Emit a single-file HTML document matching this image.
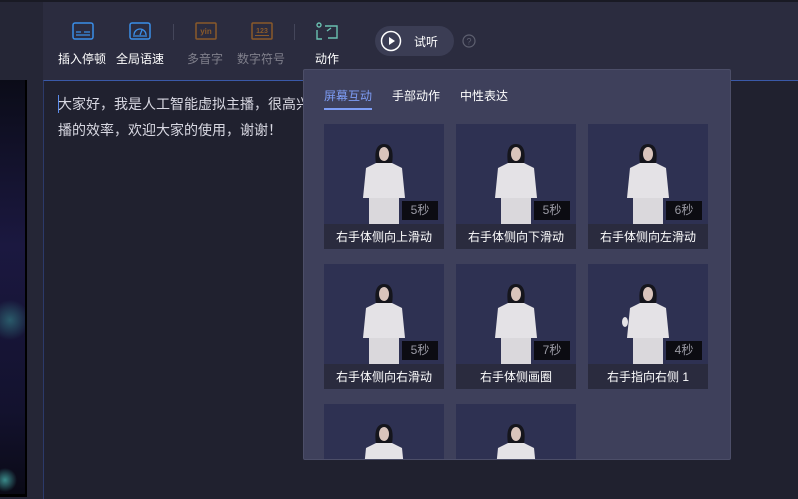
<!DOCTYPE html>
<html><head><meta charset="utf-8"><style>
*{margin:0;padding:0;box-sizing:border-box}
html,body{width:798px;height:499px;overflow:hidden}
body{background:#20212f;font-family:"Liberation Sans","Noto Sans CJK SC",sans-serif;position:relative;color:#e6e6ef}
.top{position:absolute;left:0;top:0;width:798px;height:2px;background:#191a24}
.left{position:absolute;left:0;top:2px;width:43px;height:497px;background:#252636}
.img{position:absolute;left:0;top:78px;width:27px;height:417px;background:radial-gradient(circle at 10px 240px,#2a5a6a 0,transparent 20px),radial-gradient(circle at 5px 400px,#3a8a8a 0,transparent 12px),linear-gradient(#0b0c18,#1b1840 40%,#13122e 80%,#0a0a16);border-right:2px solid #000;border-bottom:3px solid #000}
.tool{position:absolute;left:43px;top:2px;width:755px;height:78px;background:#2b2c3f}
.ed{position:absolute;left:43px;top:80px;width:755px;height:419px;background:#20212f;border-top:1px solid #3a59a8;border-left:1px solid #2c3a6a;overflow:hidden}
.ed p{position:absolute;left:14px;top:10px;font-size:14px;line-height:26px;color:#d8d8e2;white-space:nowrap}
.tb{position:absolute;top:48px;font-size:12px;color:#fff;white-space:nowrap}
.tb.dim{color:#80808c}
.sep{position:absolute;top:22px;width:1px;height:16px;background:#44465a}
.play{position:absolute;left:332px;top:24px;width:79px;height:30px;border-radius:15px;background:#3b3d54}
.pop{position:absolute;left:303px;top:69px;width:428px;height:391px;background:#3e405b;border:1px solid #4c4e68;border-radius:2px;overflow:hidden}
.tab{position:absolute;top:17px;font-size:12px;color:#fff}
.card{position:absolute;width:120px;height:125px;background:#2a2b3e}
.card .ph{position:absolute;left:0;top:0;width:120px;height:100px;background:#2e3152;overflow:hidden}
.card .lb{position:absolute;left:0;top:100px;width:120px;height:25px;text-align:center;font-size:12px;line-height:26px;color:#fff}
.pill{position:absolute;left:78px;top:77px;width:36px;height:19px;background:#0c0c12;color:#9a9aa4;font-size:12px;line-height:19px;text-align:center}
.fig{position:absolute;left:0;top:0}
</style></head><body>
<div class="top"></div>
<div class="left"><div class="img"></div></div>
<div class="tool">
<svg style="position:absolute;left:29px;top:20px" width="22" height="18" viewBox="0 0 22 18"><rect x="1" y="1" width="20" height="16" rx="2" fill="none" stroke="#3a8ee8" stroke-width="1.5"/><path d="M4 10h5M12 10h6M4 13h14" stroke="#3a8ee8" stroke-width="1.2"/></svg>
<div class="tb" style="left:15px">插入停顿</div>
<svg style="position:absolute;left:86px;top:20px" width="22" height="18" viewBox="0 0 22 18"><rect x="1" y="1" width="20" height="16" rx="2" fill="none" stroke="#3a8ee8" stroke-width="1.5"/><path d="M5 13a6 6 0 0 1 12 0M4 14h14M11 13l2-5" fill="none" stroke="#3a8ee8" stroke-width="1.3"/></svg>
<div class="tb" style="left:73px">全局语速</div>
<div class="sep" style="left:130px"></div>
<svg style="position:absolute;left:152px;top:20px" width="22" height="18" viewBox="0 0 22 18"><rect x="1" y="1" width="20" height="16" rx="1" fill="none" stroke="#8a5a2a" stroke-width="1.5"/><text x="11" y="12" font-size="8" font-weight="bold" fill="#8a5a2a" text-anchor="middle" font-family="Liberation Sans">yin</text></svg>
<div class="tb dim" style="left:144px">多音字</div>
<svg style="position:absolute;left:208px;top:20px" width="22" height="18" viewBox="0 0 22 18"><rect x="1" y="1" width="20" height="16" rx="1" fill="none" stroke="#8a5a2a" stroke-width="1.5"/><text x="11" y="11" font-size="7" font-weight="bold" fill="#8a5a2a" text-anchor="middle" font-family="Liberation Sans">123</text><path d="M4 13.5h14" stroke="#8a5a2a"/></svg>
<div class="tb dim" style="left:194px">数字符号</div>
<div class="sep" style="left:251px"></div>
<svg style="position:absolute;left:272px;top:19px" width="24" height="20" viewBox="0 0 24 20"><circle cx="4" cy="4" r="2" fill="none" stroke="#6ac0b0" stroke-width="1.4"/><path d="M2 9v9h5M10 5h12v12h-9M12 10l4-3" fill="none" stroke="#6ac0b0" stroke-width="1.4"/></svg>
<div class="tb" style="left:272px">动作</div>
<div class="play"><svg style="position:absolute;left:5px;top:4px" width="22" height="22" viewBox="0 0 22 22"><circle cx="11" cy="11" r="9.5" fill="none" stroke="#fff" stroke-width="1.5"/><path d="M9 7v8l6-4z" fill="#fff"/></svg><span style="position:absolute;left:39px;top:7px;font-size:12px;color:#fff">试听</span></div>
<svg style="position:absolute;left:419px;top:32px" width="14" height="14" viewBox="0 0 14 14"><circle cx="7" cy="7" r="6" fill="none" stroke="#5e6070" stroke-width="1.2"/><text x="7" y="10.5" font-size="9" fill="#5e6070" text-anchor="middle" font-family="Liberation Sans">?</text></svg>
</div>
<div class="ed"><div style="position:absolute;left:14px;top:14px;width:1px;height:18px;background:#5a8ae8"></div><p>大家好，我是人工智能虚拟主播，很高兴<span style="padding-left:310px">还可以批量</span><br>播的效率，欢迎大家的使用，谢谢！</p></div>
<div class="pop">
<div class="tab" style="left:20px;color:#7d9cf4">屏幕互动</div>
<div style="position:absolute;left:20px;top:38px;width:48px;height:2px;background:#7d9cf4"></div>
<div class="tab" style="left:88px">手部动作</div>
<div class="tab" style="left:156px">中性表达</div>
<div class="card" style="left:20px;top:54px"><div class="ph"><svg class="fig" width="120" height="100"><path d="M52 40q-3-20 8-20t8 20l-2 4h-12z" fill="#15151c"/><ellipse cx="60" cy="30" rx="5" ry="7" fill="#d9c4bc"/><path d="M42 44l10-5h16l10 5 3 30h-42z" fill="#e4e2e6"/><path d="M45 74h30v26h-30z" fill="#dad8dc"/></svg><div class="pill">5秒</div></div><div class="lb">右手体侧向上滑动</div></div>
<div class="card" style="left:152px;top:54px"><div class="ph"><svg class="fig" width="120" height="100"><path d="M52 40q-3-20 8-20t8 20l-2 4h-12z" fill="#15151c"/><ellipse cx="60" cy="30" rx="5" ry="7" fill="#d9c4bc"/><path d="M42 44l10-5h16l10 5 3 30h-42z" fill="#e4e2e6"/><path d="M45 74h30v26h-30z" fill="#dad8dc"/></svg><div class="pill">5秒</div></div><div class="lb">右手体侧向下滑动</div></div>
<div class="card" style="left:284px;top:54px"><div class="ph"><svg class="fig" width="120" height="100"><path d="M52 40q-3-20 8-20t8 20l-2 4h-12z" fill="#15151c"/><ellipse cx="60" cy="30" rx="5" ry="7" fill="#d9c4bc"/><path d="M42 44l10-5h16l10 5 3 30h-42z" fill="#e4e2e6"/><path d="M45 74h30v26h-30z" fill="#dad8dc"/></svg><div class="pill">6秒</div></div><div class="lb">右手体侧向左滑动</div></div>
<div class="card" style="left:20px;top:194px"><div class="ph"><svg class="fig" width="120" height="100"><path d="M52 40q-3-20 8-20t8 20l-2 4h-12z" fill="#15151c"/><ellipse cx="60" cy="30" rx="5" ry="7" fill="#d9c4bc"/><path d="M42 44l10-5h16l10 5 3 30h-42z" fill="#e4e2e6"/><path d="M45 74h30v26h-30z" fill="#dad8dc"/></svg><div class="pill">5秒</div></div><div class="lb">右手体侧向右滑动</div></div>
<div class="card" style="left:152px;top:194px"><div class="ph"><svg class="fig" width="120" height="100"><path d="M52 40q-3-20 8-20t8 20l-2 4h-12z" fill="#15151c"/><ellipse cx="60" cy="30" rx="5" ry="7" fill="#d9c4bc"/><path d="M42 44l10-5h16l10 5 3 30h-42z" fill="#e4e2e6"/><path d="M45 74h30v26h-30z" fill="#dad8dc"/></svg><div class="pill">7秒</div></div><div class="lb">右手体侧画圈</div></div>
<div class="card" style="left:284px;top:194px"><div class="ph"><svg class="fig" width="120" height="100"><path d="M52 40q-3-20 8-20t8 20l-2 4h-12z" fill="#15151c"/><ellipse cx="60" cy="30" rx="5" ry="7" fill="#d9c4bc"/><path d="M42 44l10-5h16l10 5 3 30h-42z" fill="#e4e2e6"/><path d="M45 74h30v26h-30z" fill="#dad8dc"/><ellipse cx="37" cy="58" rx="3" ry="5" fill="#e4e2e6"/></svg><div class="pill">4秒</div></div><div class="lb">右手指向右侧 1</div></div>
<div class="card" style="left:20px;top:334px"><div class="ph"><svg class="fig" width="120" height="100"><path d="M52 40q-3-20 8-20t8 20l-2 4h-12z" fill="#15151c"/><ellipse cx="60" cy="30" rx="5" ry="7" fill="#d9c4bc"/><path d="M42 44l10-5h16l10 5 3 30h-42z" fill="#e4e2e6"/></svg></div></div>
<div class="card" style="left:152px;top:334px"><div class="ph"><svg class="fig" width="120" height="100"><path d="M52 40q-3-20 8-20t8 20l-2 4h-12z" fill="#15151c"/><ellipse cx="60" cy="30" rx="5" ry="7" fill="#d9c4bc"/><path d="M42 44l10-5h16l10 5 3 30h-42z" fill="#e4e2e6"/></svg></div></div>
</div>
</body></html>
